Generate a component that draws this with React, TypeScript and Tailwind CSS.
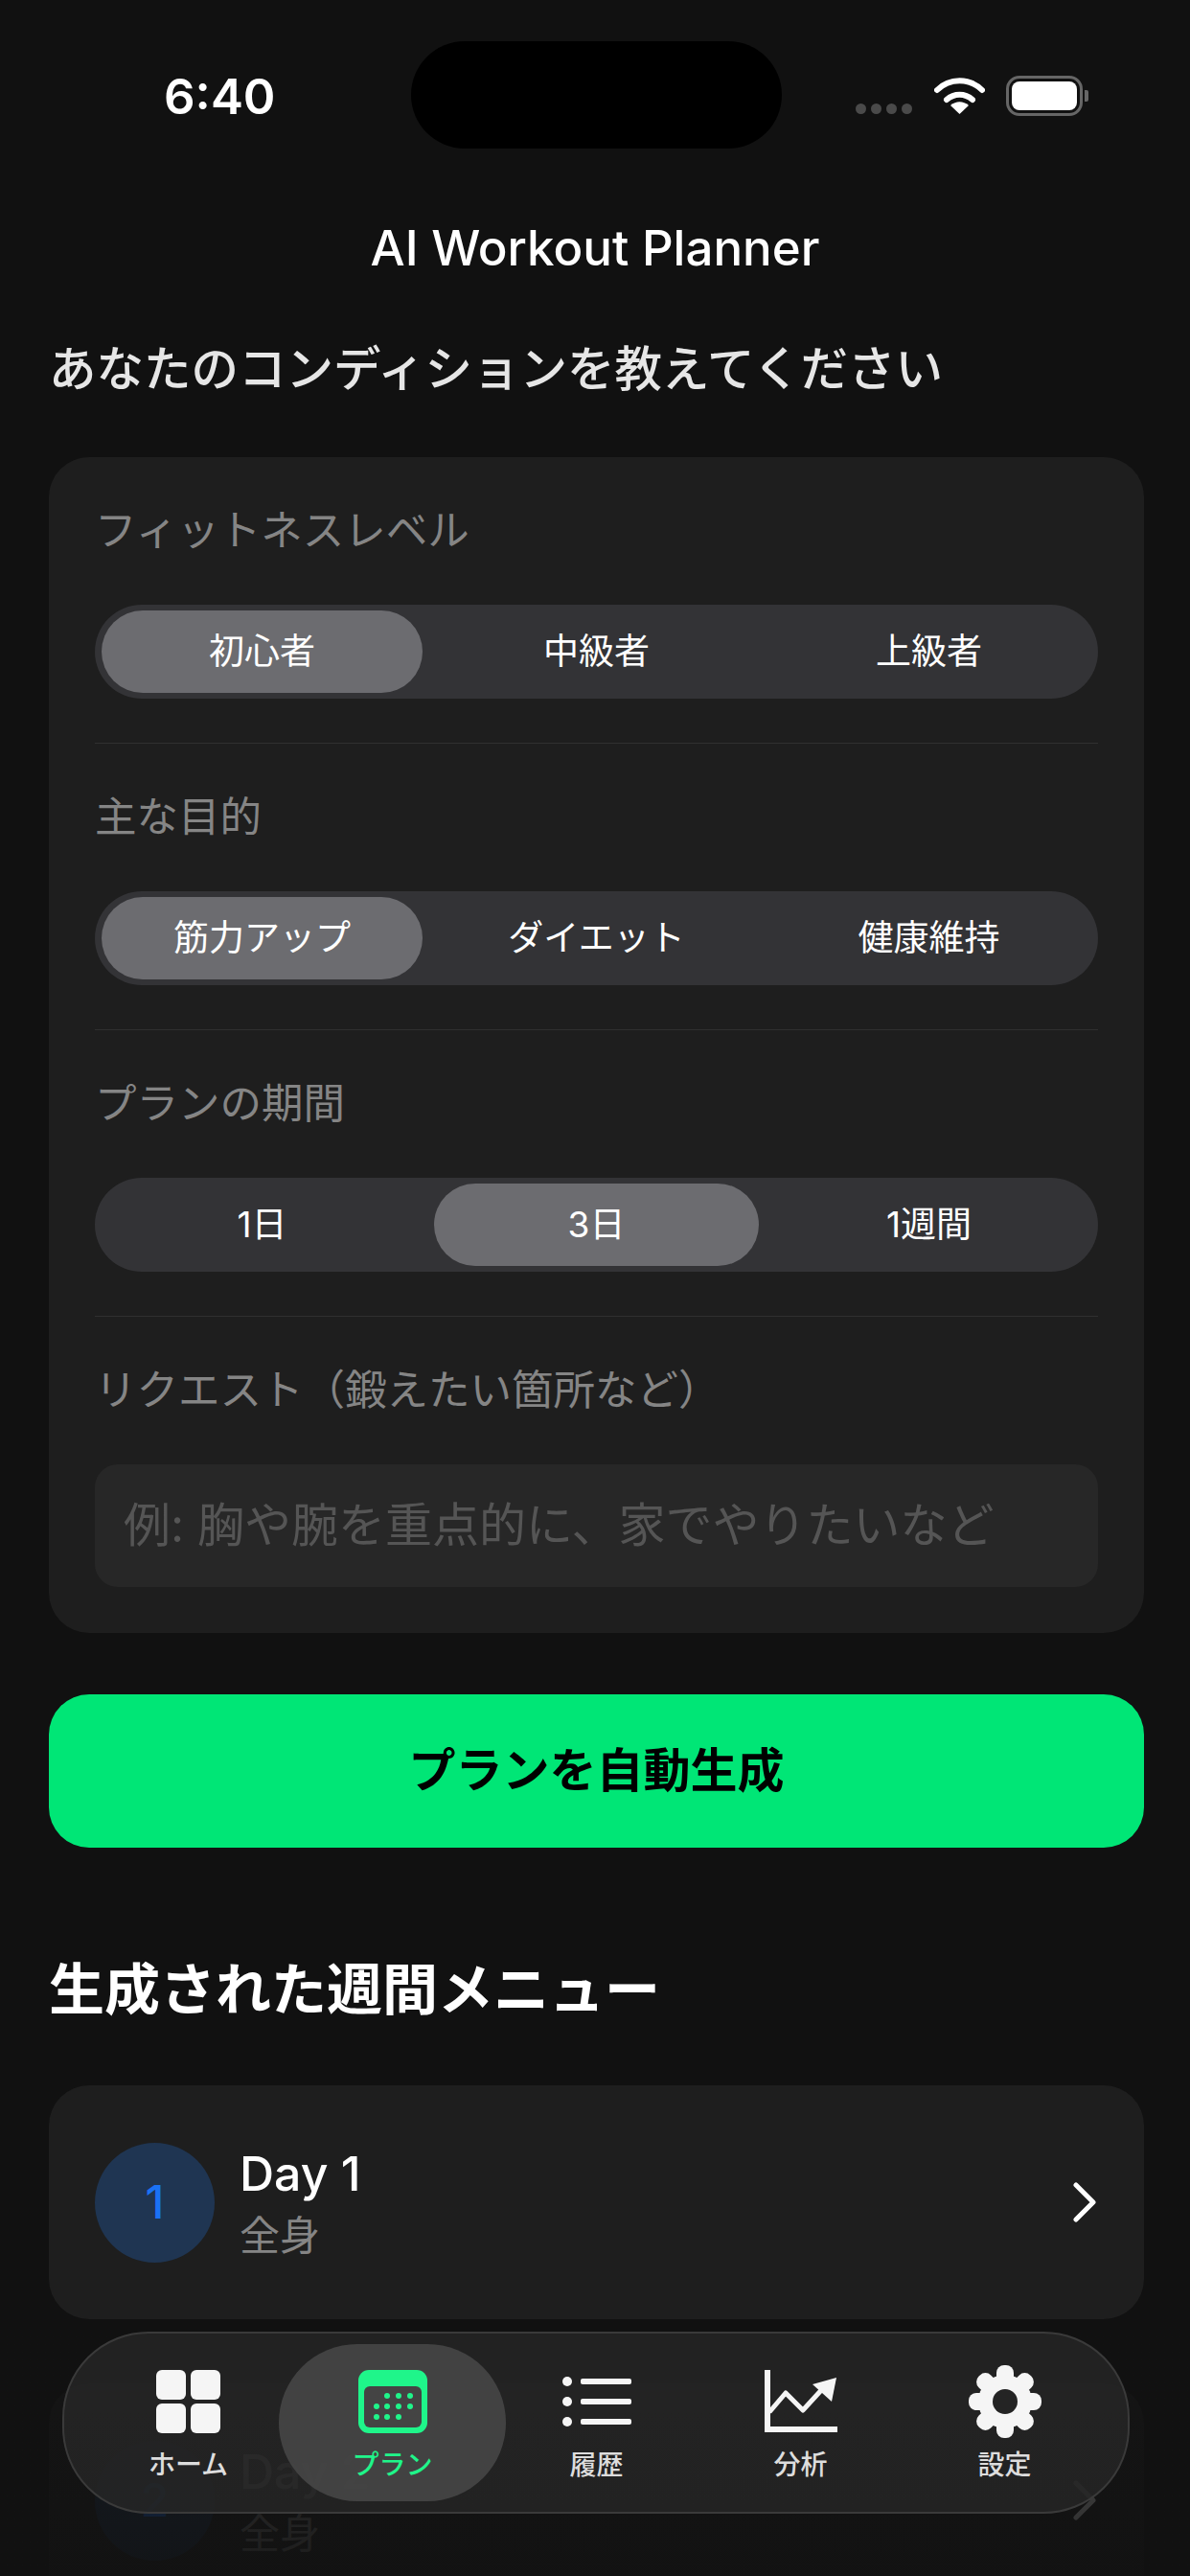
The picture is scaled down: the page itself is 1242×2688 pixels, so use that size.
const fontStack = "font-['Inter','Noto_Sans_CJK_JP',sans-serif]";

function StatusBar() {
  return (
    <div className="flex h-[200px] items-center justify-between pl-[171px] pr-[106px]">
      <span className="text-[51px] font-semibold leading-none text-white">6:40</span>
      <div className="flex items-center">
        <div className="mt-[26px] mr-[23px] flex gap-[5px]">
          <span className="h-[11px] w-[11px] rounded-full bg-[#4a4a4a]" />
          <span className="h-[11px] w-[11px] rounded-full bg-[#4a4a4a]" />
          <span className="h-[11px] w-[11px] rounded-full bg-[#4a4a4a]" />
          <span className="h-[11px] w-[11px] rounded-full bg-[#4a4a4a]" />
        </div>
        <svg width="53" height="38" viewBox="0 0 53 38" fill="none" stroke="#fff" strokeWidth="6" strokeLinecap="round">
          <path d="M3 13C16 0 37 0 50 13" />
          <path d="M13 23c8-7 19-7 27 0" />
          <path d="M17 29c6-5 13-5 19 0L26.500 38z" fill="#fff" stroke="none" />
        </svg>
        <div className="ml-[22px] flex items-center">
          <div className="flex h-[42px] w-[80px] rounded-[14px] border-[3px] border-[#666666] p-[3px]">
            <div className="flex-1 rounded-[8px] bg-white" />
          </div>
          <div className="ml-[2px] h-[12px] w-[4px] rounded-r-[2px] bg-[#666666]" />
        </div>
      </div>
    </div>
  );
}

function Segment({ items, active }: { items: string[]; active: number }) {
  return (
    <div className="grid h-[98px] grid-cols-3 gap-[8px] rounded-[49px] bg-[#333336] px-[7px] py-[6px]">
      {items.map((item, i) => (
        <div
          key={item}
          className={
            (i === 0 ? "mr-[4px] " : "") +
            (i === active
              ? "flex items-center justify-center rounded-[43px] bg-[#6c6c70] text-[37px] text-white"
              : "flex items-center justify-center rounded-[43px] text-[37px] text-white")
          }
        >
          {item}
        </div>
      ))}
    </div>
  );
}

function Label({ children }: { children: string }) {
  return <div className="h-[60px] text-[43.500px] leading-[60px] text-[#858585]">{children}</div>;
}

function OptionRow({ label, items, active }: { label: string; items: string[]; active: number }) {
  return (
    <div>
      <Label>{label}</Label>
      <div className="mt-[48px]">
        <Segment items={items} active={active} />
      </div>
      <div className="mt-[46px] mb-[46px] h-px bg-[#303030]" />
    </div>
  );
}

function DayCard({ day, dim }: { day: number; dim?: boolean }) {
  return (
    <div className={dim ? "mt-[67px] flex h-[244px] items-center rounded-[42px] bg-[#1e1e1e] pl-[48px] pr-[50px]" : "flex h-[244px] items-center rounded-[42px] bg-[#1e1e1e] pl-[48px] pr-[50px]"}>
      <div className="flex h-[125px] w-[125px] items-center justify-center rounded-full bg-[#1f3552] text-[48px] font-medium text-[#1a72f5]">
        {day}
      </div>
      <div className="ml-[26px] flex-1">
        <div className="text-[50px] font-medium leading-[60px] text-white">Day {day}</div>
        <div className="mt-[10px] text-[42px] leading-[50px] text-[#858585]">全身</div>
      </div>
      <svg width="24" height="42" viewBox="0 0 24 42" fill="none" stroke="#fff" strokeWidth="5" strokeLinecap="round" strokeLinejoin="round">
        <path d="M3 3l18 18L3 39" />
      </svg>
    </div>
  );
}

function HomeIcon() {
  return (
    <svg width="67" height="66" viewBox="0 0 67 66" fill="#f5f5f5">
      <rect x="0" y="0" width="31" height="31" rx="6" />
      <rect x="36" y="0" width="31" height="31" rx="6" />
      <rect x="0" y="35" width="31" height="31" rx="6" />
      <rect x="36" y="35" width="31" height="31" rx="6" />
    </svg>
  );
}

function CalendarIcon() {
  const dots = [
    [30, 27], [42, 27], [54, 27],
    [19, 38], [30, 38], [42, 38], [54, 38],
    [19, 49], [30, 49], [42, 49],
  ];
  return (
    <svg width="72" height="66" viewBox="0 0 72 66">
      <rect x="0" y="0" width="72" height="66" rx="11" fill="#1ff58a" />
      <rect x="6" y="17" width="60" height="43" rx="6" fill="#444444" />
      {dots.map(([x, y]) => (
        <circle key={`${x}-${y}`} cx={x} cy={y} r="3" fill="#1ff58a" />
      ))}
    </svg>
  );
}

function ListIcon() {
  return (
    <svg width="72" height="52" viewBox="0 0 72 52" fill="#f5f5f5">
      <circle cx="5" cy="5" r="5" />
      <circle cx="5" cy="26" r="5" />
      <circle cx="5" cy="47" r="5" />
      <rect x="19" y="2" width="53" height="6" rx="2" />
      <rect x="19" y="23" width="53" height="6" rx="2" />
      <rect x="19" y="44" width="53" height="6" rx="2" />
    </svg>
  );
}

function ChartIcon() {
  return (
    <svg width="76" height="66" viewBox="0 0 76 66" fill="none" stroke="#f5f5f5" strokeWidth="5">
      <path d="M3 0v62h73" strokeWidth="6" />
      <path d="M5 44l17-20 18 18 22-24" strokeLinejoin="round" />
      <path d="M50 15l25-7-5 25z" fill="#f5f5f5" stroke="none" />
    </svg>
  );
}

function GearIcon() {
  const angles = [0, 45, 90, 135, 180, 225, 270, 315];
  return (
    <svg width="76" height="76" viewBox="0 0 76 76" fill="#f5f5f5">
      {angles.map((a) => (
        <rect key={a} x="29" y="0" width="18" height="20" rx="8" transform={`rotate(${a} 38 38)`} />
      ))}
      <circle cx="38" cy="38" r="28" />
      <circle cx="38" cy="38" r="13" fill="#242424" />
    </svg>
  );
}

function TabItem({ icon, label, active }: { icon: React.ReactNode; label: string; active?: boolean }) {
  return (
    <div className="relative flex flex-col items-center">
      <div className="flex h-[76px] items-center justify-center">{icon}</div>
      <div className={active ? "mt-[8px] text-[28px] font-medium leading-[40px] text-[#1ff58a]" : "mt-[8px] text-[28px] font-medium leading-[40px] text-[#dddddd]"}>
        {label}
      </div>
    </div>
  );
}

function TabBar() {
  return (
    <div className="absolute left-[65px] top-[2433px] grid h-[190px] w-[1114px] grid-cols-5 items-start rounded-[90px] border-2 border-[#3a3a3a] bg-[#262626]/85 pl-[23px] pr-[22px] pt-[33px]">
      <div className="absolute left-[224px] top-[11px] h-[164px] w-[237px] rounded-[82px] bg-[#444444]/95" />
      <TabItem icon={<HomeIcon />} label="ホーム" />
      <TabItem icon={<CalendarIcon />} label="プラン" active />
      <TabItem icon={<ListIcon />} label="履歴" />
      <TabItem icon={<ChartIcon />} label="分析" />
      <TabItem icon={<GearIcon />} label="設定" />
    </div>
  );
}

export default function App() {
  return (
    <div className={`relative h-[2688px] w-[1242px] overflow-hidden bg-[#111111] ${fontStack}`}>
      <StatusBar />
      <div className="absolute left-[429px] top-[43px] h-[112px] w-[387px] rounded-[56px] bg-black" />

      <div className="mt-[29px] h-[60px] text-center text-[51px] font-medium leading-[60px] text-white">AI Workout Planner</div>

      <main className="pl-[51px] pr-[48px]">
        <h1 className="mt-[66px] h-[60px] text-[49.500px] font-medium leading-[60px] text-[#e6e6e6]">
          あなたのコンディションを教えてください
        </h1>

        <section className="mt-[62px] rounded-[42px] bg-[#1e1e1e] px-[48px] pt-[46px] pb-[48px]">
          <OptionRow label="フィットネスレベル" items={["初心者", "中級者", "上級者"]} active={0} />
          <OptionRow label="主な目的" items={["筋力アップ", "ダイエット", "健康維持"]} active={0} />
          <OptionRow label="プランの期間" items={["1日", "3日", "1週間"]} active={1} />
          <Label>リクエスト（鍛えたい箇所など）</Label>
          <div className="mt-[48px] flex h-[128px] items-center rounded-[24px] bg-[#272727] px-[30px] text-[49px] text-[#555555]">
            例: 胸や腕を重点的に、家でやりたいなど
          </div>
        </section>

        <button className="mt-[64px] flex h-[160px] w-full items-center justify-center rounded-[42px] bg-[#00e676] text-[49px] font-bold text-black">
          プランを自動生成
        </button>

        <h2 className="mt-[108px] h-[80px] text-[58px] font-semibold leading-[80px] text-white">生成された週間メニュー</h2>

        <div className="mt-[60px]">
          <DayCard day={1} />
          <DayCard day={2} dim />
        </div>
      </main>

      <div className="absolute bottom-0 left-0 h-[266px] w-full bg-gradient-to-b from-[#111111]/70 to-[#111111]/90" />
      <TabBar />
    </div>
  );
}
